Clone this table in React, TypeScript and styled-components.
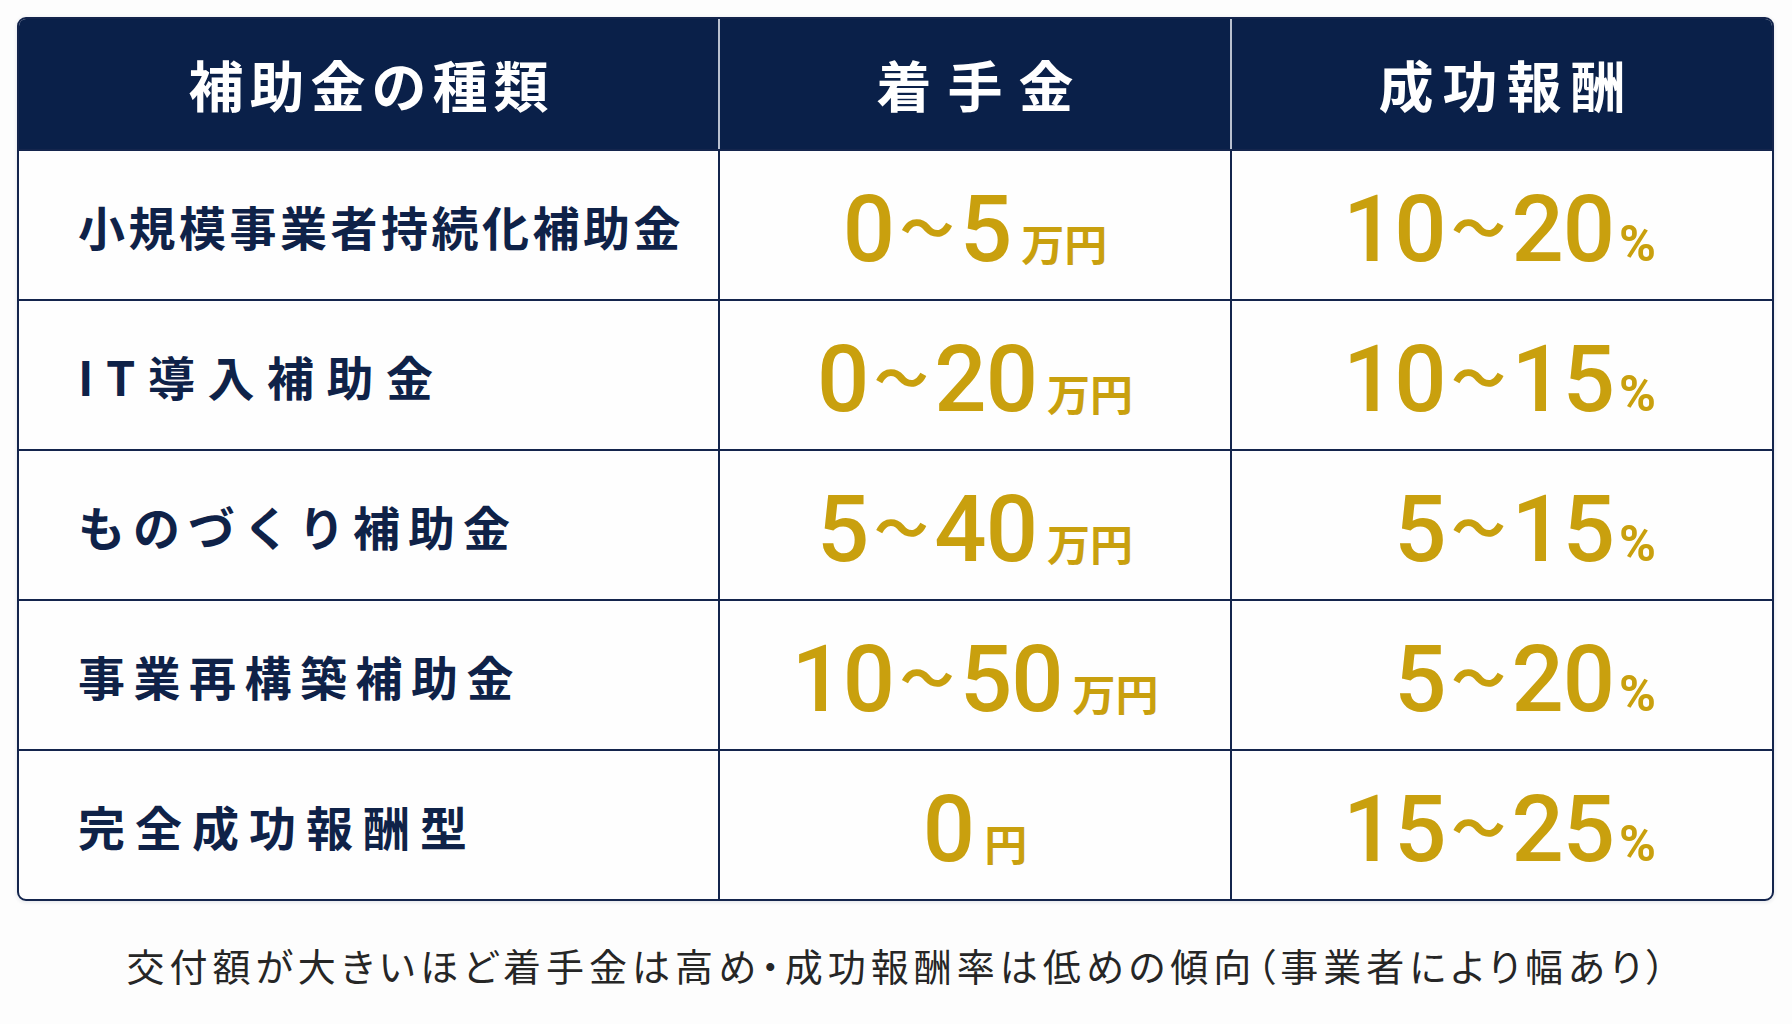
import styled, { createGlobalStyle } from "styled-components";

const GlobalStyle = createGlobalStyle`
  html, body {
    margin: 0;
    padding: 0;
    background: #fdfdfd;
  }
  body {
    font-family: "Noto Sans CJK JP", "Noto Sans", sans-serif;
  }
`;

type Row = {
  name: string;
  nameSpacing: number;
  fee: { from?: string; to: string; unit: string };
  reward: { from: string; to: string };
};

const rows: Row[] = [
  { name: "小規模事業者持続化補助金", nameSpacing: 3.5, fee: { from: "0", to: "5", unit: "万円" }, reward: { from: "10", to: "20" } },
  { name: "IT導入補助金", nameSpacing: 12.5, fee: { from: "0", to: "20", unit: "万円" }, reward: { from: "10", to: "15" } },
  { name: "ものづくり補助金", nameSpacing: 8, fee: { from: "5", to: "40", unit: "万円" }, reward: { from: "5", to: "15" } },
  { name: "事業再構築補助金", nameSpacing: 8.5, fee: { from: "10", to: "50", unit: "万円" }, reward: { from: "5", to: "20" } },
  { name: "完全成功報酬型", nameSpacing: 10, fee: { to: "0", unit: "円" }, reward: { from: "15", to: "25" } },
];

const App = () => {
  return (
    <>
      <GlobalStyle />
      <Page>
        <Table>
          <HeadCell $spacing={6}>補助金の種類</HeadCell>
          <HeadCell $spacing={16} $divider>着手金</HeadCell>
          <HeadCell $spacing={9} $divider>成功報酬</HeadCell>
          {rows.map((row) => (
            <RowGroup key={row.name}>
              <NameCell $spacing={row.nameSpacing}>{row.name}</NameCell>
              <ValueCell $align="center">
                <Amount>
                  {row.fee.from && (
                    <>
                      <Digits>{row.fee.from}</Digits>
                      <Tilde>～</Tilde>
                    </>
                  )}
                  <Digits>{row.fee.to}</Digits>
                  <Unit>{row.fee.unit}</Unit>
                </Amount>
              </ValueCell>
              <ValueCell $align="flex-end">
                <Amount>
                  <Digits>{row.reward.from}</Digits>
                  <Tilde>～</Tilde>
                  <Digits>{row.reward.to}</Digits>
                  <Percent>%</Percent>
                </Amount>
              </ValueCell>
            </RowGroup>
          ))}
        </Table>
        <Note>交付額が大きいほど着手金は高め・成功報酬率は低めの傾向（事業者により幅あり）</Note>
      </Page>
    </>
  );
};

const Page = styled.div`
  width: 1792px;
  height: 1024px;
  box-sizing: border-box;
  padding: 17px 18px 0 17px;
  display: flex;
  flex-direction: column;
  align-items: stretch;
`;

const Table = styled.div`
  display: grid;
  grid-template-columns: 699px 512px 1fr;
  grid-template-rows: 130px repeat(5, 150px);
  border: 2px solid #14254d;
  border-radius: 9px;
  overflow: hidden;
  background: #fefefe;
  box-shadow: 0 1px 4px rgba(20, 37, 77, 0.12);
`;

const HeadCell = styled.div<{ $spacing: number; $divider?: boolean }>`
  display: flex;
  align-items: center;
  justify-content: center;
  background: #0a2049;
  color: #ffffff;
  font-family: "Noto Sans CJK JP", sans-serif;
  font-weight: 700;
  font-size: 55px;
  letter-spacing: ${({ $spacing }) => $spacing}px;
  text-indent: ${({ $spacing }) => $spacing}px;
  border-left: ${({ $divider }) => ($divider ? "2px solid #b9c0cf" : "none")};
  padding-bottom: 2px;
  box-sizing: border-box;
`;

const RowGroup = styled.div`
  display: contents;
`;

const NameCell = styled.div<{ $spacing: number }>`
  display: flex;
  align-items: center;
  padding-left: 59px;
  border-top: 2px solid #14254d;
  color: #0f2248;
  font-family: "Noto Sans CJK JP", sans-serif;
  font-weight: 700;
  font-size: 47px;
  letter-spacing: ${({ $spacing }) => $spacing}px;
  white-space: nowrap;
`;

const ValueCell = styled.div<{ $align: string }>`
  display: flex;
  align-items: center;
  justify-content: ${({ $align }) => $align};
  padding-right: ${({ $align }) => ($align === "flex-end" ? "116px" : "0")};
  border-top: 2px solid #14254d;
  border-left: 2px solid #14254d;
  padding-top: 10px;
  box-sizing: border-box;
`;

const Amount = styled.div`
  display: flex;
  align-items: baseline;
  color: #c9a00e;
  white-space: nowrap;
`;

const Digits = styled.span`
  font-family: Roboto, "Noto Sans", sans-serif;
  font-weight: 500;
  font-size: 92px;
  line-height: 1;
  letter-spacing: -1px;
`;

const Tilde = styled.span`
  font-family: "Noto Sans CJK JP", sans-serif;
  font-weight: 700;
  font-size: 54px;
  line-height: 1;
  margin: 0 6px;
  transform: translateY(-12px);
`;

const Unit = styled.span`
  font-family: "Noto Sans CJK JP", sans-serif;
  font-weight: 700;
  font-size: 43px;
  line-height: 1;
  margin-left: 10px;
`;

const Percent = styled.span`
  font-family: Roboto, "Noto Sans", sans-serif;
  font-weight: 700;
  font-size: 50px;
  line-height: 1;
  margin-left: 5px;
`;

const Note = styled.div`
  margin-top: 36px;
  text-align: center;
  color: #262626;
  font-family: "Noto Sans CJK JP", sans-serif;
  font-weight: 400;
  font-size: 38px;
  letter-spacing: 5px;
  font-feature-settings: "palt";
  padding-left: 6px;
`;

export default App;
